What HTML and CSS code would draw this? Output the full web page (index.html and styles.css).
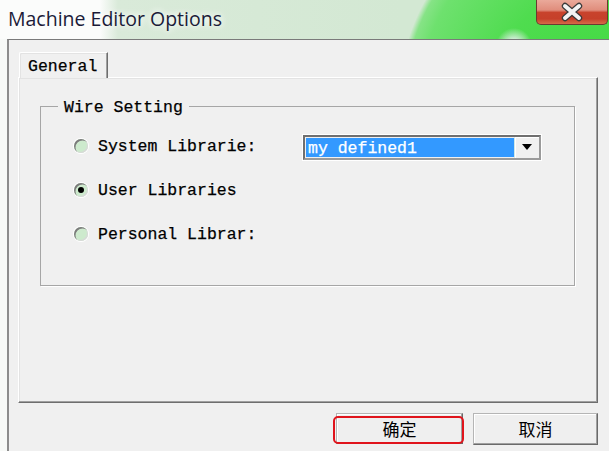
FILE: index.html
```html
<!DOCTYPE html>
<html>
<head>
<meta charset="utf-8">
<title>Machine Editor Options</title>
<link rel="stylesheet" href="styles.css">
</head>
<body>
<div class="window">
  <div class="titlebar">
    <div class="title">Machine Editor Options</div>
    <div class="close">
      <svg width="30" height="20" viewBox="0 0 30 20">
        <path d="M8 4 L22 16 M22 4 L8 16" stroke="#3a3a3a" stroke-width="6.4" stroke-linecap="round" fill="none"/>
        <path d="M8 4 L22 16 M22 4 L8 16" stroke="#f4f4f4" stroke-width="4" stroke-linecap="round" fill="none"/>
      </svg>
    </div>
  </div>
  <div class="client">
    <div class="tabs">
      <div class="tab">General</div>
    </div>
    <div class="panel">
      <fieldset class="group">
        <legend class="legend">Wire Setting</legend>
        <div class="options">
          <div class="row">
            <span class="radio"></span>
            <span class="label label-wide">System Librarie:</span>
            <div class="combo">
              <div class="combo-value">my defined1</div>
              <div class="combo-btn">
                <svg width="12" height="7" viewBox="0 0 12 7"><path d="M1 0 H11 L6 6 Z" fill="#000"/></svg>
              </div>
            </div>
          </div>
          <div class="row">
            <span class="radio checked"></span>
            <span class="label">User Libraries</span>
          </div>
          <div class="row">
            <span class="radio"></span>
            <span class="label">Personal Librar:</span>
          </div>
        </div>
      </fieldset>
    </div>
    <div class="buttons">
      <div class="btn btn-ok">确定</div>
      <div class="btn btn-cancel">取消</div>
    </div>
  </div>
</div>
</body>
</html>
```
FILE: styles.css
```css
html, body {
  margin: 0;
  padding: 0;
}
body {
  width: 609px;
  height: 451px;
  overflow: hidden;
  background: #f7f9f7;
  font-family: "Liberation Mono", "DejaVu Sans Mono", monospace;
}
.window {
  display: flex;
  flex-direction: column;
  height: 451px;
}
.titlebar {
  height: 39px;
  flex: none;
  display: flex;
  align-items: flex-start;
  background:
    radial-gradient(circle 18px at 514px 46px, rgba(220,220,250,1) 0, rgba(236,240,244,0.8) 40%, rgba(200,240,200,0) 100%),
    radial-gradient(circle 204px at 603px 100px, #3ed93e 0, #4fdc4f 55%, #6ee16e 90%, #86e386 97%, rgba(200,232,200,0) 100%),
    linear-gradient(90deg, #fbfcfb 0, #fbfcfb 100px, #d9ead9 118px, #d3e8d3 400px, #d3e8d3 100%);
}
.title {
  margin: 5px 0 0 8px;
  font-family: "Open Sans", "Noto Sans", sans-serif;
  font-size: 19.5px;
  line-height: 28px;
  color: #1b1b38;
  text-shadow: 0 0 6px #fff, 0 0 10px #fff;
}
.close {
  margin-left: auto;
  margin-right: 1px;
  width: 72px;
  height: 25px;
  box-sizing: border-box;
  border: 1px solid #6a3a30;
  border-top: none;
  border-radius: 0 0 5px 5px;
  background: linear-gradient(180deg, #eaa99a 0, #e08d7c 42%, #c8432c 52%, #c6402a 78%, #d66a48 100%);
  display: flex;
  align-items: center;
  justify-content: center;
}
.close svg { display: block; }
.client {
  flex: 1;
  margin-left: 7px;
  border-left: 2px solid #8c8c8c;
  border-top: 1px solid #7a7a7a;
  background: #f0f0f0;
  padding: 12px 11px 0 9px;
  display: flex;
  flex-direction: column;
}
.tabs {
  display: flex;
  height: 26px;
  position: relative;
  z-index: 1;
  margin-bottom: -1px;
}
.tab {
  margin-left: 1px;
  width: 89px;
  box-sizing: border-box;
  border-top: 1px solid #ffffff;
  border-left: 1px solid #ffffff;
  border-right: 1px solid #6e6e6e;
  box-shadow: inset -1px 0 0 #a0a0a0, inset 1px 1px 0 #e3e3e3;
  border-radius: 2px 0 0 0;
  background: #f0f0f0;
  font-size: 16.5px;
  line-height: 27px;
  padding-left: 8px;
  color: #000;
  -webkit-text-stroke: 0.25px #000;
}
.panel {
  height: 326px;
  box-sizing: border-box;
  border: 1px solid;
  border-color: #ffffff #6e6e6e #6e6e6e #ffffff;
  box-shadow: inset -1px -1px 0 #a0a0a0, inset 1px 1px 0 #e3e3e3;
  background: #f0f0f0;
}
.group {
  margin: 17px 0 0 21px;
  width: 535px;
  box-sizing: border-box;
  padding: 0;
  border: 1px solid #a6a6a6;
  box-shadow: 1px 1px 0 #ffffff;
}
.legend {
  margin-left: 17px;
  padding: 4px 6px 0 6px;
  font-size: 16.5px;
  line-height: 18px;
  color: #000;
  -webkit-text-stroke: 0.25px #000;
}
.options {
  padding: 7px 0 29px 33px;
  display: flex;
  flex-direction: column;
}
.row {
  height: 44px;
  display: flex;
  align-items: center;
}
.radio {
  width: 14px;
  height: 14px;
  box-sizing: border-box;
  border-radius: 50%;
  background: #cdeacd;
  box-shadow: inset 1.5px 1.5px 0 #7c7c7c, inset -1px -1px 0 #d8d8d8, 0 0 0 1px #ffffff;
  position: relative;
  flex: none;
}
.radio.checked::after {
  content: "";
  position: absolute;
  left: 4px;
  top: 4px;
  width: 6px;
  height: 6px;
  border-radius: 50%;
  background: #000;
}
.label {
  margin-left: 10px;
  font-size: 16.5px;
  line-height: 20px;
  padding-top: 2px;
  color: #000;
  white-space: nowrap;
  -webkit-text-stroke: 0.25px #000;
}
.label-wide {
  width: 205px;
}
.combo {
  width: 238px;
  height: 25px;
  box-sizing: border-box;
  border: 2px solid;
  border-color: #6f6f6f #9a9a9a #9a9a9a #6f6f6f;
  box-shadow: 0 0 0 1px #ffffff;
  display: flex;
  margin-top: 2px;
}
.combo-value {
  flex: 1;
  background: #3399ff;
  color: #ffffff;
  font-size: 16.5px;
  line-height: 21px;
  padding-left: 2px;
  border: 1px solid #f0f0f0;
  border-right: 1px solid #cfe8e8;
  -webkit-text-stroke: 0.25px #fff;
}
.combo-btn {
  width: 24px;
  background: #f0f0f0;
  display: flex;
  align-items: center;
  justify-content: center;
  box-shadow: inset 1px 1px 0 #ffffff;
}
.combo-btn svg { display: block; }
.buttons {
  display: flex;
  justify-content: flex-end;
  gap: 10px;
  margin-top: 10px;
}
.btn {
  height: 31px;
  box-sizing: border-box;
  border: 1px solid;
  border-color: #b5b5b5 #6a6a6a #6a6a6a #b5b5b5;
  box-shadow: inset -1px -1px 0 #a0a0a0, inset 1px 1px 0 #ffffff;
  background: #efefef;
  font-family: "Noto Sans CJK SC", sans-serif;
  font-size: 17px;
  line-height: 29px;
  text-align: center;
  color: #000;
  position: relative;
}
.btn-ok { width: 127px; }
.btn-cancel { width: 125px; height: 32px; }
.btn-ok::after {
  content: "";
  position: absolute;
  left: -4px;
  right: -2px;
  top: 2px;
  bottom: -1px;
  border: 2px solid #e0141c;
  border-radius: 5px;
}
```
